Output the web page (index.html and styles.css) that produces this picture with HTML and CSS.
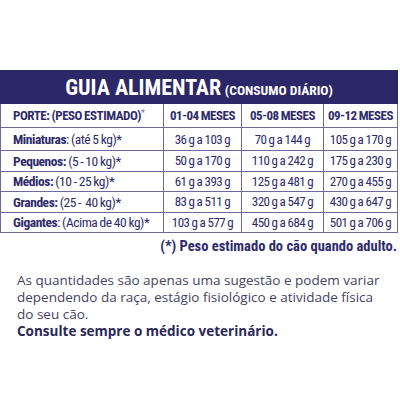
FILE: index.html
```html
<!DOCTYPE html>
<html lang="pt-BR">
<head>
<meta charset="utf-8">
<link rel="stylesheet" href="styles.css">
</head>
<body>
<div class="page">
  <table class="guia">
    <colgroup>
      <col class="c1"><col class="c2"><col class="c3"><col class="c4">
    </colgroup>
    <thead>
      <tr class="title-row">
        <th colspan="4"><span class="t-main">GUIA ALIMENTAR</span> <span class="t-sub">(CONSUMO DIÁRIO)</span></th>
      </tr>
    </thead>
    <tbody>
      <tr class="head-row">
        <td class="lbl">PORTE: (PESO ESTIMADO)<sup>*</sup></td>
        <td>01-04 MESES</td>
        <td>05-08 MESES</td>
        <td>09-12 MESES</td>
      </tr>
      <tr class="row-tall">
        <td class="lbl"><b>Miniaturas</b>: (até 5 kg)*</td>
        <td>36 g a 103 g</td><td>70 g a 144 g</td><td>105 g a 170 g</td>
      </tr>
      <tr>
        <td class="lbl"><b>Pequenos:</b> (5 - 10 kg)*</td>
        <td>50 g a 170 g</td><td>110 g a 242 g</td><td>175 g a 230 g</td>
      </tr>
      <tr>
        <td class="lbl"><b>Médios:</b> (10 - 25 kg)*</td>
        <td>61 g a 393 g</td><td>125 g a 481 g</td><td>270 g a 455 g</td>
      </tr>
      <tr>
        <td class="lbl"><b>Grandes:</b> (25 - &nbsp;40 kg)*</td>
        <td>83 g a 511 g</td><td>320 g a 547 g</td><td>430 g a 647 g</td>
      </tr>
      <tr>
        <td class="lbl"><b>Gigantes</b>: (Acima de 40 kg)*</td>
        <td>103 g a 577 g</td><td>450 g a 684 g</td><td>501 g a 706 g</td>
      </tr>
    </tbody>
  </table>
  <p class="note">(*) Peso estimado do cão quando adulto.</p>
  <div class="info">
    <p class="info-text">As quantidades são apenas uma sugestão e podem variar dependendo da raça, estágio fisiológico e atividade física do seu cão.</p>
    <p class="info-strong">Consulte sempre o médico veterinário.</p>
  </div>
</div>
</body>
</html>
```
FILE: styles.css
```css
html, body {
  margin: 0;
  padding: 0;
  background: #ffffff;
}
.page {
  width: 400px;
  height: 400px;
  padding-top: 70px;
  box-sizing: border-box;
}
.guia {
  width: 397px;
  border-collapse: collapse;
  table-layout: fixed;
  font-family: "Roboto Condensed", "Roboto", sans-serif;
  font-stretch: condensed;
  color: #2e2a6b;
}
.c1 { width: 163px; }
.c2 { width: 78px; }
.c3 { width: 82px; }
.c4 { width: 74px; }
.title-row th {
  background: #2c2766;
  color: #ffffff;
  height: 32px;
  padding: 0;
  text-align: center;
  border: 1px solid #2c2766;
  white-space: nowrap;
}
.t-main {
  font-size: 22px;
  font-weight: bold;
}
.t-sub {
  font-size: 13.5px;
  font-weight: bold;
}
.guia td {
  border: 1px solid #6d6a98;
  height: 20.5px;
  padding: 0;
  text-align: center;
  font-size: 13px;
  letter-spacing: -0.45px;
  word-spacing: -0.5px;
  white-space: nowrap;
  box-sizing: border-box;
}
.guia td.lbl {
  text-align: left;
  padding-left: 12px;
  font-size: 13.5px;
}
.guia td b {
  font-weight: bold;
}
.head-row td,
.head-row td.lbl {
  height: 24px;
  font-weight: bold;
  font-size: 13px;
}
.row-tall td {
  height: 23px;
}
.head-row sup {
  font-size: 9px;
  font-weight: normal;
  vertical-align: 4px;
  line-height: 0;
  color: #6d6a98;
}
.note {
  margin: 5px 3px 0 0;
  text-align: right;
  font-family: "Roboto Condensed", "Roboto", sans-serif;
  font-stretch: condensed;
  font-weight: bold;
  font-size: 14.5px;
  color: #2e2a6b;
}
.info {
  margin: 17px 0 0 17px;
  font-family: "Open Sans", "Liberation Sans", sans-serif;
  font-size: 13.5px;
  line-height: 17px;
}
.info p {
  margin: 0;
}
.info-text {
  color: #45435f;
  width: 370px;
}
.info-strong {
  color: #2b2858;
  font-weight: bold;
}
```
